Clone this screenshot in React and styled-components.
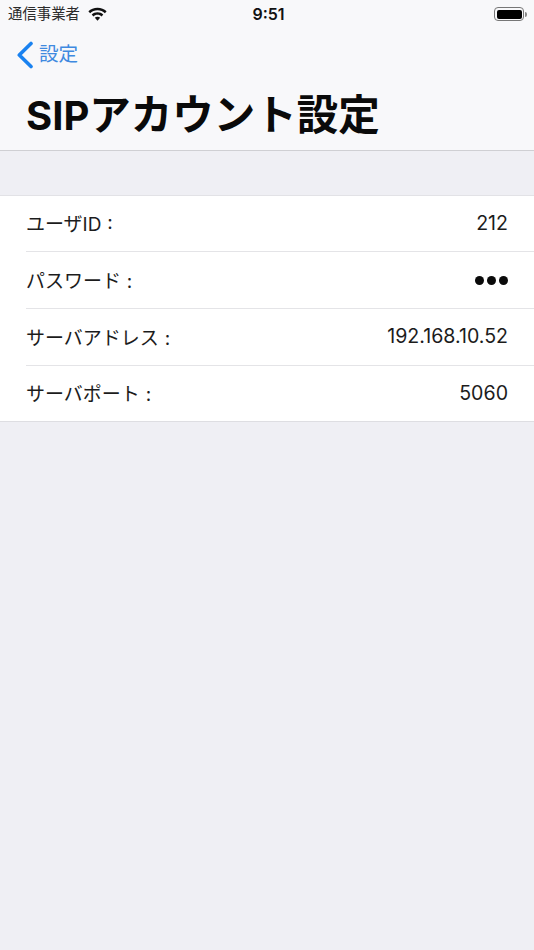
import React from "react";
import styled, { createGlobalStyle } from "styled-components";

const Global = createGlobalStyle`
  html, body { margin: 0; padding: 0; background: #efeff4; }
  * { box-sizing: border-box; }
  body { font-family: Inter, "Noto Sans CJK JP", sans-serif; -webkit-font-smoothing: antialiased; }
`;
const Page = styled.div`
  width: 534px;
  height: 950px;
  background: #efeff4;
  overflow: hidden;
`;
const Header = styled.header`
  height: 151px;
  background: #f8f8fa;
  border-bottom: 1px solid #cfcfd3;
  display: flex;
  flex-direction: column;
`;
const StatusBar = styled.div`
  height: 28px;
  display: grid;
  grid-template-columns: 1fr auto 1fr;
  align-items: center;
  padding: 0 7px 0 8px;
`;
const Carrier = styled.div`
  display: flex;
  align-items: center;
  gap: 8px;
  font-size: 14.4px;
  color: #2b2b2b;
  line-height: 1;
`;
const Time = styled.div`
  font-size: 16px;
  font-weight: 600;
  color: #111;
  padding-left: 2px;
`;
const Battery = styled.div`
  justify-self: end;
  display: flex;
  align-items: center;
  gap: 1px;
`;
const BatteryBody = styled.div`
  width: 30px;
  height: 14px;
  border: 1px solid #777;
  border-radius: 4px;
  padding: 1.5px;
  display: flex;
`;
const BatteryFill = styled.div`
  flex: 1;
  background: #000;
  border-radius: 2px;
`;
const BatteryCap = styled.div`
  width: 2px;
  height: 5px;
  background: #888;
  border-radius: 0 2px 2px 0;
`;
const NavBar = styled.div`
  height: 53px;
  display: flex;
  align-items: center;
  gap: 5px;
  padding-left: 16px;
`;
const BackLabel = styled.span`
  font-size: 19.6px;
  color: #3f8ae0;
  line-height: 1;
`;
const Title = styled.h1`
  margin: 0;
  padding: 11px 0 0 26px;
  font-size: 41.5px;
  line-height: 46px;
  font-weight: 700;
  color: #0a0a0a;
  white-space: nowrap;
`;
const Latin = styled.span`
  font-size: 40px;
`;
const List = styled.section`
  margin-top: 44px;
  background: #fff;
  border-top: 1px solid #e2e2e6;
  border-bottom: 1px solid #dedee2;
`;
const Row = styled.div`
  height: 57px;
  margin-left: 26px;
  padding: 0 26px 2px 0;
  display: flex;
  align-items: center;
  justify-content: space-between;
  font-size: 19px;
  font-weight: 400;
  color: #1c1c1c;
  border-bottom: 1px solid #e4e4e7;
  &:first-child { height: 56px; }
  &:last-child { height: 55px; border-bottom: none; }
`;
const Label = styled.span`
  word-spacing: 0.5px;
`;
const Value = styled.span`
  font-size: 19.6px;
`;
const Dots = styled.span`
  display: flex;
  gap: 3px;
  margin-top: 2px;
`;
const Dot = styled.i`
  width: 9px;
  height: 9px;
  border-radius: 50%;
  background: #0a0a0a;
`;

const Wifi = () => (
  <svg width="19" height="14" viewBox="0 0 20 14" fill="#111">
    <path d="M10 0.5C6.2 0.5 2.9 1.9 0.4 4.2L2.2 6.1C4.2 4.2 7 3.1 10 3.1s5.8 1.1 7.8 3l1.8-1.9C17.1 1.9 13.8 0.5 10 0.5z" />
    <path d="M10 5.2c-2.4 0-4.5.9-6.1 2.4l1.8 1.9C6.8 8.4 8.3 7.8 10 7.8s3.2.6 4.3 1.7l1.8-1.9C14.5 6.1 12.4 5.2 10 5.2z" />
    <path d="M10 9.9c-1.1 0-2.1.4-2.8 1.1L10 14l2.8-3c-.7-.7-1.7-1.1-2.8-1.1z" />
  </svg>
);
const Chevron = () => (
  <svg width="18" height="28" viewBox="0 0 17 28" fill="none" stroke="#1a82f0" strokeWidth="3.6" strokeLinecap="round" strokeLinejoin="round">
    <path d="M14.5 2.5L2.8 14l11.7 11.5" />
  </svg>
);

const rows = [
  ["ユーザID :", "212"],
  ["パスワード :", null],
  ["サーバアドレス :", "192.168.10.52"],
  ["サーバポート :", "5060"],
];

export default function App() {
  return (
    <Page>
      <Global />
      <Header>
        <StatusBar>
          <Carrier>通信事業者<Wifi /></Carrier>
          <Time>9:51</Time>
          <Battery>
            <BatteryBody><BatteryFill /></BatteryBody>
            <BatteryCap />
          </Battery>
        </StatusBar>
        <NavBar>
          <Chevron />
          <BackLabel>設定</BackLabel>
        </NavBar>
        <Title><Latin>SIP</Latin>アカウント設定</Title>
      </Header>
      <List>
        {rows.map(([k, v]) => (
          <Row key={k}>
            <Label>{k}</Label>
            {v ? <Value>{v}</Value> : <Dots><Dot /><Dot /><Dot /></Dots>}
          </Row>
        ))}
      </List>
    </Page>
  );
}
